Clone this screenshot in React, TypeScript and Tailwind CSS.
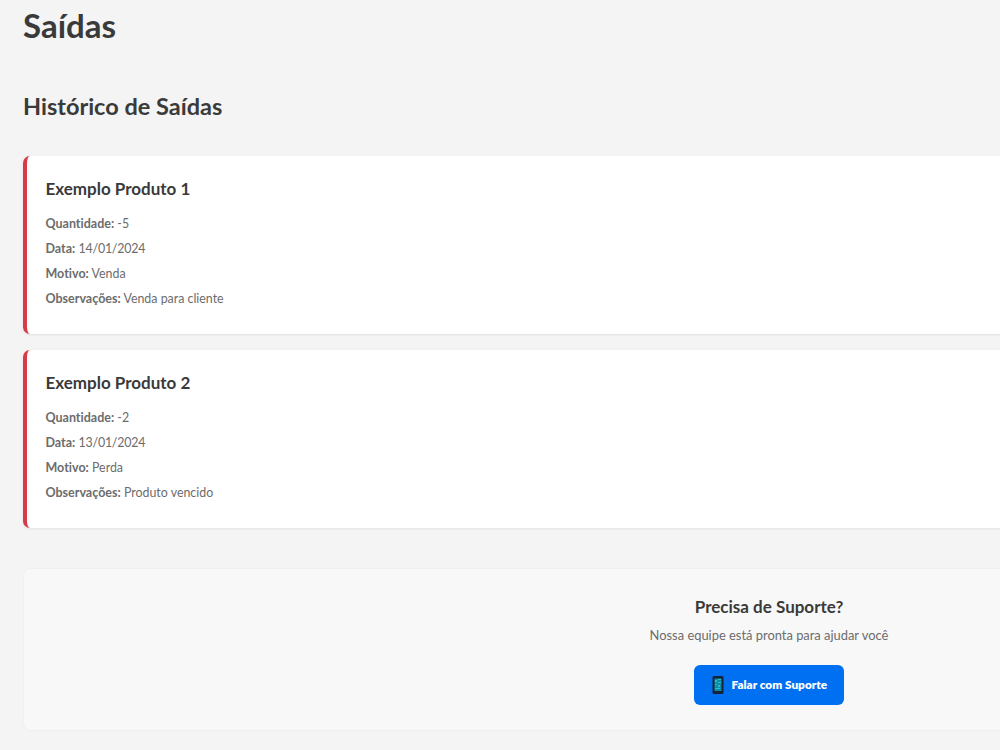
import React from "react";

export default function Saidas() {
  // Mock data for the stock exits
  const saidas = [
    {
      id: 1,
      produto: "Exemplo Produto 1",
      quantidade: -5,
      data: "14/01/2024",
      motivo: "Venda",
      observacoes: "Venda para cliente",
    },
    {
      id: 2,
      produto: "Exemplo Produto 2",
      quantidade: -2,
      data: "13/01/2024",
      motivo: "Perda",
      observacoes: "Produto vencido",
    },
  ];

  return (
    <div className="h-[750px] overflow-hidden bg-[#f4f4f4] font-['Lato',sans-serif] text-[#3a3a3a] [font-variant-ligatures:none]">
      <div className="ml-[23px] w-[1492px]">
        {/* Header */}
        <h1 className="pt-[5px] text-[33px] leading-[40px] font-bold">
          Saídas
        </h1>
        <h2 className="mt-[46px] text-[23.5px] leading-[30px] font-bold">
          Histórico de Saídas
        </h2>

        {/* History */}
        <div className="mt-[34.5px] flex flex-col gap-[16px]">
          {saidas.map((saida) => (
            <div
              key={saida.id}
              className="h-[178px] rounded-[7px] border-l-4 border-[#d93a4a] bg-white pt-[21px] pl-[18.5px] shadow-[0_1px_3px_rgba(0,0,0,0.08)]"
            >
              <h3 className="text-[17px] leading-[24px] font-bold">
                {saida.produto}
              </h3>
              <div className="mt-[10px] text-[12.4px] leading-[25.1px] text-[#6c6c6c]">
                <p>
                  <strong className="text-[12.5px] font-bold">Quantidade:</strong>{" "}
                  {saida.quantidade}
                </p>
                <p>
                  <strong className="text-[12.5px] font-bold">Data:</strong>{" "}
                  <span className="tracking-[-0.2px]">{saida.data}</span>
                </p>
                <p>
                  <strong className="text-[12.5px] font-bold">Motivo:</strong>{" "}
                  {saida.motivo}
                </p>
                <p>
                  <strong className="text-[12.5px] font-bold">Observações:</strong>{" "}
                  {saida.observacoes}
                </p>
              </div>
            </div>
          ))}
        </div>

        {/* Support */}
        <div className="mt-[40px] flex h-[163px] flex-col items-center rounded-[8px] border border-[#f0f0f0] bg-[#f8f8f8] pt-[26px]">
          <h3 className="text-[17px] leading-[24px] font-bold">
            Precisa de Suporte?
          </h3>
          <p className="mt-[6px] text-[12.9px] leading-[20px] text-[#6c6c6c]">
            Nossa equipe está pronta para ajudar você
          </p>
          <button className="mt-[20px] mr-[1px] flex h-[40px] w-[150px] items-center rounded-[6px] bg-[#0070f3] pl-[18px] text-[11.8px] font-extrabold text-white">
            <svg width="12" height="18" viewBox="0 0 12 18" className="mr-[8px]">
              <rect x="0.5" width="11" height="18" rx="1.5" fill="#15243a" />
              <rect x="2.5" y="2.5" width="7" height="12.5" fill="#0c8ba3" />
              <path
                d="M3 4h2v2H3zM6 3h3v1H6zM6 6h3v1H6zM3 8h2v1H3zM6 9h2v2H6zM3 12h5v1H3z"
                fill="#25bdce"
              />
            </svg>
            Falar com Suporte
          </button>
        </div>
      </div>
    </div>
  );
}
